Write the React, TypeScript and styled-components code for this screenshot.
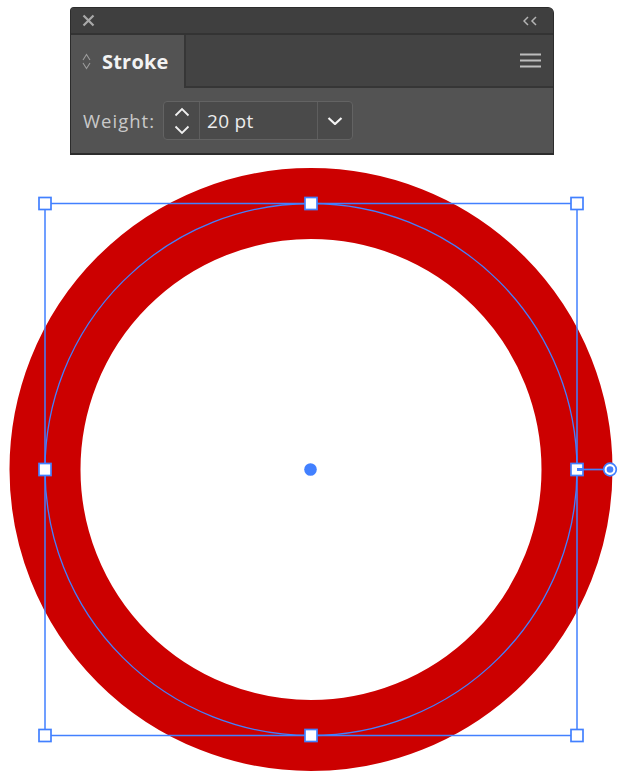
import React from 'react';
import styled, { createGlobalStyle } from 'styled-components';

const GlobalStyle = createGlobalStyle`
  html, body {
    margin: 0;
    padding: 0;
    background: #ffffff;
  }
  body {
    font-family: 'Open Sans', 'Noto Sans', sans-serif;
  }
`;

const Page = styled.div`
  display: flex;
  flex-direction: column;
  width: 624px;
  height: 782px;
  overflow: hidden;
`;

const Panel = styled.div`
  margin: 7px 0 0 70px;
  width: 484px;
  box-sizing: border-box;
  border: 1px solid #2c2c2c;
  border-bottom-width: 2px;
  border-radius: 4px 6px 0 0;
  overflow: hidden;
  background: #535353;
`;

const TitleBar = styled.div`
  height: 25px;
  display: flex;
  align-items: center;
  justify-content: space-between;
  padding: 0 14px 0 11px;
  background: #3f3f3f;
  border-bottom: 2px solid #333333;
`;

const TabRow = styled.div`
  display: flex;
  height: 53px;
  background: #434343;
`;

const Tab = styled.div`
  width: 115px;
  display: flex;
  align-items: center;
  gap: 11px;
  padding-left: 11px;
  box-sizing: border-box;
  background: #535353;
  border-right: 2px solid #363636;
`;

const TabLabel = styled.span`
  font-size: 20px;
  font-weight: 700;
  color: #f2f2f2;
  letter-spacing: 0.2px;
`;

const TabFill = styled.div`
  flex: 1;
  display: flex;
  align-items: center;
  justify-content: flex-end;
  padding-right: 12px;
  border-bottom: 2px solid #363636;
`;

const Content = styled.div`
  height: 65px;
  display: flex;
  align-items: center;
  gap: 7px;
  padding-left: 12px;
  background: #535353;
`;

const Label = styled.span`
  width: 73px;
  font-size: 18.5px;
  letter-spacing: 1px;
  color: #c9c9c9;
`;

const Field = styled.div`
  display: flex;
  height: 39px;
  box-sizing: border-box;
  border: 1px solid #636363;
  border-radius: 4px;
  overflow: hidden;
  background: #4a4a4a;
`;

const FieldCell = styled.div<{ w: number; divider?: boolean }>`
  width: ${(p) => p.w}px;
  display: flex;
  align-items: center;
  justify-content: center;
  border-right: ${(p) => (p.divider ? '1px solid #5e5e5e' : 'none')};
  box-sizing: border-box;
`;

const Value = styled.div`
  width: 118px;
  display: flex;
  align-items: center;
  padding-left: 7px;
  box-sizing: border-box;
  border-right: 1px solid #5e5e5e;
  font-size: 19px;
  letter-spacing: 0.3px;
  color: #ececec;
`;

const Canvas = styled.svg`
  display: block;
  flex-shrink: 0;
`;

const BLUE = '#4280ff';

const Handle = ({ x, y }: { x: number; y: number }) => (
  <rect x={x - 6} y={y - 6} width={12} height={12} fill="#fff" stroke={BLUE} strokeWidth={1.7} />
);

export default function App() {
  const cx = 311;
  const cy = 469.5;
  const r = 266;
  const left = cx - r;
  const right = cx + r;
  const top = cy - r;
  const bottom = cy + r;

  return (
    <>
      <GlobalStyle />
      <Page>
        <Panel>
          <TitleBar>
            <svg width="13" height="13" viewBox="0 0 13 13">
              <path d="M1.5 1.5 L11.5 11.5 M11.5 1.5 L1.5 11.5" stroke="#a9a9a9" strokeWidth="2.2" />
            </svg>
            <svg width="16" height="10" viewBox="0 0 16 10">
              <path d="M5 1 L1 5 L5 9 M13 1 L9 5 L13 9" stroke="#b4b4b4" strokeWidth="1.5" fill="none" />
            </svg>
          </TitleBar>
          <TabRow>
            <Tab>
              <svg width="9" height="17" viewBox="0 0 9 17">
                <path d="M1 7 L4.5 1.5 L8 7 M1 10 L4.5 15.5 L8 10" stroke="#9c9c9c" strokeWidth="1.1" fill="none" />
              </svg>
              <TabLabel>Stroke</TabLabel>
            </Tab>
            <TabFill>
              <svg width="21" height="15" viewBox="0 0 21 15">
                <path d="M0 1.5 H21 M0 7.5 H21 M0 13.5 H21" stroke="#bdbdbd" strokeWidth="2" />
              </svg>
            </TabFill>
          </TabRow>
          <Content>
            <Label>Weight:</Label>
            <Field>
              <FieldCell w={36} divider>
                <svg width="16" height="28" viewBox="0 0 16 28">
                  <path d="M1.5 8.5 L8 2 L14.5 8.5 M1.5 19.5 L8 26 L14.5 19.5" stroke="#f0f0f0" strokeWidth="1.8" fill="none" />
                </svg>
              </FieldCell>
              <Value>20 pt</Value>
              <FieldCell w={34}>
                <svg width="16" height="8" viewBox="0 0 16 8">
                  <path d="M1.5 1 L8 7 L14.5 1" stroke="#f4f4f4" strokeWidth="2.2" fill="none" />
                </svg>
              </FieldCell>
            </Field>
          </Content>
        </Panel>
        <Canvas width="624" height="627" viewBox="0 155 624 627">
          <circle cx={cx} cy={cy} r={r} fill="none" stroke="#cc0000" strokeWidth={71} />
          <circle cx={cx} cy={cy} r={r} fill="none" stroke={BLUE} strokeWidth={1.3} />
          <rect x={left} y={top} width={right - left} height={bottom - top} fill="none" stroke={BLUE} strokeWidth={1.5} />
          <line x1={right} y1={cy} x2={604} y2={cy} stroke={BLUE} strokeWidth={1.7} />
          <Handle x={left} y={top} />
          <Handle x={cx} y={top} />
          <Handle x={right} y={top} />
          <Handle x={left} y={cy} />
          <Handle x={left} y={bottom} />
          <Handle x={cx} y={bottom} />
          <Handle x={right} y={bottom} />
          <rect x={right - 6} y={cy - 6} width={12} height={12} fill="#fff" stroke={BLUE} strokeWidth={1.7} />
          <line x1={right} y1={cy} x2={right + 6} y2={cy} stroke={BLUE} strokeWidth={3} />
          <circle cx={610} cy={cy} r={6.3} fill="#fff" stroke={BLUE} strokeWidth={1.7} />
          <circle cx={610} cy={cy} r={3.3} fill={BLUE} />
          <circle cx={cx - 0.5} cy={cy} r={6.3} fill={BLUE} />
        </Canvas>
      </Page>
    </>
  );
}
